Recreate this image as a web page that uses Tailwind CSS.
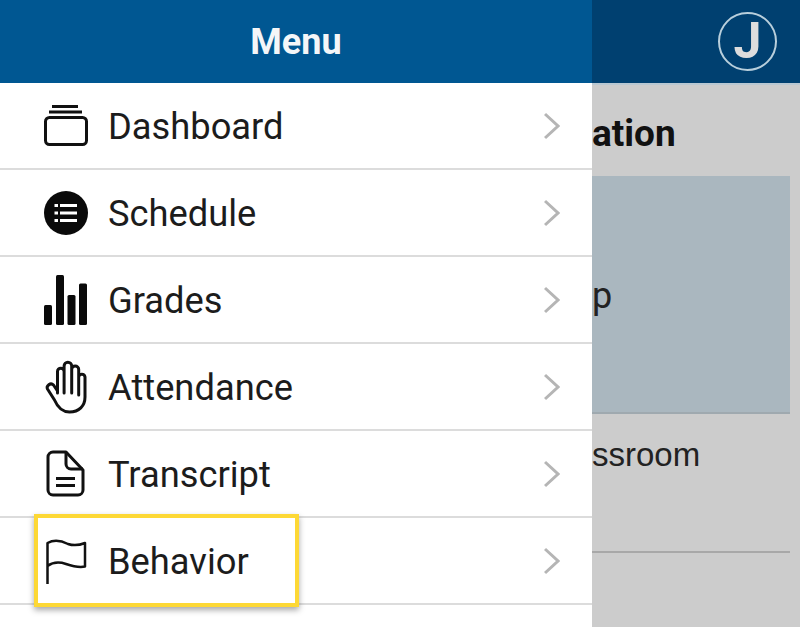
<!DOCTYPE html>
<html lang="en">
<head>
  <meta charset="UTF-8" />
  <title>Menu</title>
  <script src="https://cdn.jsdelivr.net/npm/@tailwindcss/browser@4"></script>
</head>
<body class="w-[800px] h-[627px] overflow-hidden flex bg-[#cccccc] font-['Roboto',sans-serif]">

  <!-- Drawer -->
  <div class="w-[592px] shrink-0 h-full bg-white flex flex-col">
    <div class="h-[83px] shrink-0 bg-[#005792] flex items-center justify-center text-[#f4f6f8] font-bold text-[36px]">Menu</div>

    <div class="h-[87px] shrink-0 border-b-2 border-[#dcdcdc] flex items-center pl-[44px] pr-[32px]">
      <svg class="w-[44px] h-[56px] shrink-0" viewBox="44 98 44 56" fill="none" stroke="#111" stroke-width="3">
        <rect x="45.5" y="117.5" width="41" height="27" rx="4" />
        <path d="M49 112H82M52 106.500H78" stroke-width="3" />
      </svg>
      <span class="ml-[20px] mt-[3px] flex-1 text-[36.3px] text-[#1c1c1c]">Dashboard</span>
      <svg class="w-[16px] h-[28px]" viewBox="0 0 16 28" fill="none" stroke="#b5b5b5" stroke-width="3"><path d="M1 2L14 14L1 26" /></svg>
    </div>

    <div class="h-[87px] shrink-0 border-b-2 border-[#dcdcdc] flex items-center pl-[44px] pr-[32px]">
      <svg class="w-[44px] h-[56px] shrink-0" viewBox="44 185 44 56">
        <circle cx="66" cy="213" r="22" fill="#0a0a0a" />
        <path d="M60 205.500H77M60 213H77M60 220.500H77" stroke="#fff" stroke-width="3" />
        <path d="M54.500 205.500H58M54.500 213H58M54.500 220.500H58" stroke="#fff" stroke-width="3" />
      </svg>
      <span class="ml-[20px] mt-[3px] flex-1 text-[36.3px] text-[#1c1c1c]">Schedule</span>
      <svg class="w-[16px] h-[28px]" viewBox="0 0 16 28" fill="none" stroke="#b5b5b5" stroke-width="3"><path d="M1 2L14 14L1 26" /></svg>
    </div>

    <div class="h-[87px] shrink-0 border-b-2 border-[#dcdcdc] flex items-center pl-[44px] pr-[32px]">
      <svg class="w-[44px] h-[56px] shrink-0" viewBox="44 272 44 56" fill="#0a0a0a">
        <rect x="44" y="305" width="8" height="20" rx="1.500" />
        <rect x="56" y="275" width="8" height="50" rx="1.500" />
        <rect x="67.500" y="295" width="8" height="30" rx="1.500" />
        <rect x="79" y="283.500" width="8" height="41.500" rx="1.500" />
      </svg>
      <span class="ml-[20px] mt-[3px] flex-1 text-[36.3px] text-[#1c1c1c]">Grades</span>
      <svg class="w-[16px] h-[28px]" viewBox="0 0 16 28" fill="none" stroke="#b5b5b5" stroke-width="3"><path d="M1 2L14 14L1 26" /></svg>
    </div>

    <div class="h-[87px] shrink-0 border-b-2 border-[#dcdcdc] flex items-center pl-[44px] pr-[32px]">
      <svg class="w-[44px] h-[56px] shrink-0" viewBox="44 359 44 56" fill="none" stroke="#111" stroke-width="3" stroke-linecap="round" stroke-linejoin="round">
        <path d="M57.500 393V371.500a3.300 3.300 0 0 1 6.600 0V393M64.100 393V366a3.800 3.800 0 0 1 7.600 0V393M71.700 393V369.500a3.500 3.500 0 0 1 7 0V395M78.700 377a3.200 3.200 0 0 1 6.300 0V397c0 9-6 15-15.500 15c-8 0-12-5-15-12L47.500 389c-1.500-3 3-7 6-4l4 6" />
      </svg>
      <span class="ml-[20px] mt-[3px] flex-1 text-[36.3px] text-[#1c1c1c]">Attendance</span>
      <svg class="w-[16px] h-[28px]" viewBox="0 0 16 28" fill="none" stroke="#b5b5b5" stroke-width="3"><path d="M1 2L14 14L1 26" /></svg>
    </div>

    <div class="h-[87px] shrink-0 border-b-2 border-[#dcdcdc] flex items-center pl-[44px] pr-[32px]">
      <svg class="w-[44px] h-[56px] shrink-0" viewBox="44 446 44 56" fill="none" stroke="#111" stroke-width="3" stroke-linejoin="round">
        <path d="M53 452H66L83 470V490a5 5 0 0 1-5 5H53a5 5 0 0 1-5-5V457a5 5 0 0 1 5-5Z" />
        <path d="M66 452V464a5 5 0 0 0 5 5H83M56 478.500H75M56 485.500H75" />
      </svg>
      <span class="ml-[20px] mt-[3px] flex-1 text-[36.3px] text-[#1c1c1c]">Transcript</span>
      <svg class="w-[16px] h-[28px]" viewBox="0 0 16 28" fill="none" stroke="#b5b5b5" stroke-width="3"><path d="M1 2L14 14L1 26" /></svg>
    </div>

    <div class="h-[87px] shrink-0 border-b-2 border-[#dcdcdc] flex items-center pl-[34px] pr-[32px]">
      <div class="relative w-[265px] h-[93px] shrink-0 bg-white border-[4px] border-[#fdd835] shadow-[0_3px_6px_rgba(0,0,0,0.35)] flex items-center pl-[6px]">
        <svg class="w-[44px] h-[56px] shrink-0" viewBox="44 533 44 56" fill="none" stroke="#111" stroke-width="2.500" stroke-linejoin="round">
          <path d="M47.500 584V543C55 539 62 541 68 544C74 546 80 545 85 543V566.500C78 568 72 566 66 564C60 562 53 562 47.500 566" />
        </svg>
        <span class="ml-[20px] mt-[3px] text-[36.3px] text-[#1c1c1c]">Behavior</span>
      </div>
      <span class="flex-1"></span>
      <svg class="w-[16px] h-[28px]" viewBox="0 0 16 28" fill="none" stroke="#b5b5b5" stroke-width="3"><path d="M1 2L14 14L1 26" /></svg>
    </div>
  </div>

  <!-- Page behind the drawer -->
  <div class="flex-1 min-w-0 overflow-hidden flex flex-col">
    <div class="h-[83px] shrink-0 bg-[#004070] border-b-2 border-[#b9c8d2] flex items-center justify-end pr-[23px] box-content">
      <div class="w-[59px] h-[59px] rounded-full border-2 border-[#b8cfdc] flex items-center justify-center text-[#dddddd] font-bold text-[50px]">J</div>
    </div>
    <div class="h-[91px] shrink-0 flex items-center pt-[6px] text-[37px] font-bold text-[#111]">ation</div>
    <div class="w-[198px] h-[238px] shrink-0 bg-[#aab7bf] border-b-2 border-[#9fa9af] flex items-center pt-[4px] text-[36px] text-[#222]">p</div>
    <div class="w-[198px] h-[139px] shrink-0 border-b-2 border-[#a8a8a8] pt-[22px] text-[33px] leading-[38px] text-[#222] font-['Liberation_Sans',sans-serif] whitespace-nowrap">ssroom</div>
  </div>

</body>
</html>
